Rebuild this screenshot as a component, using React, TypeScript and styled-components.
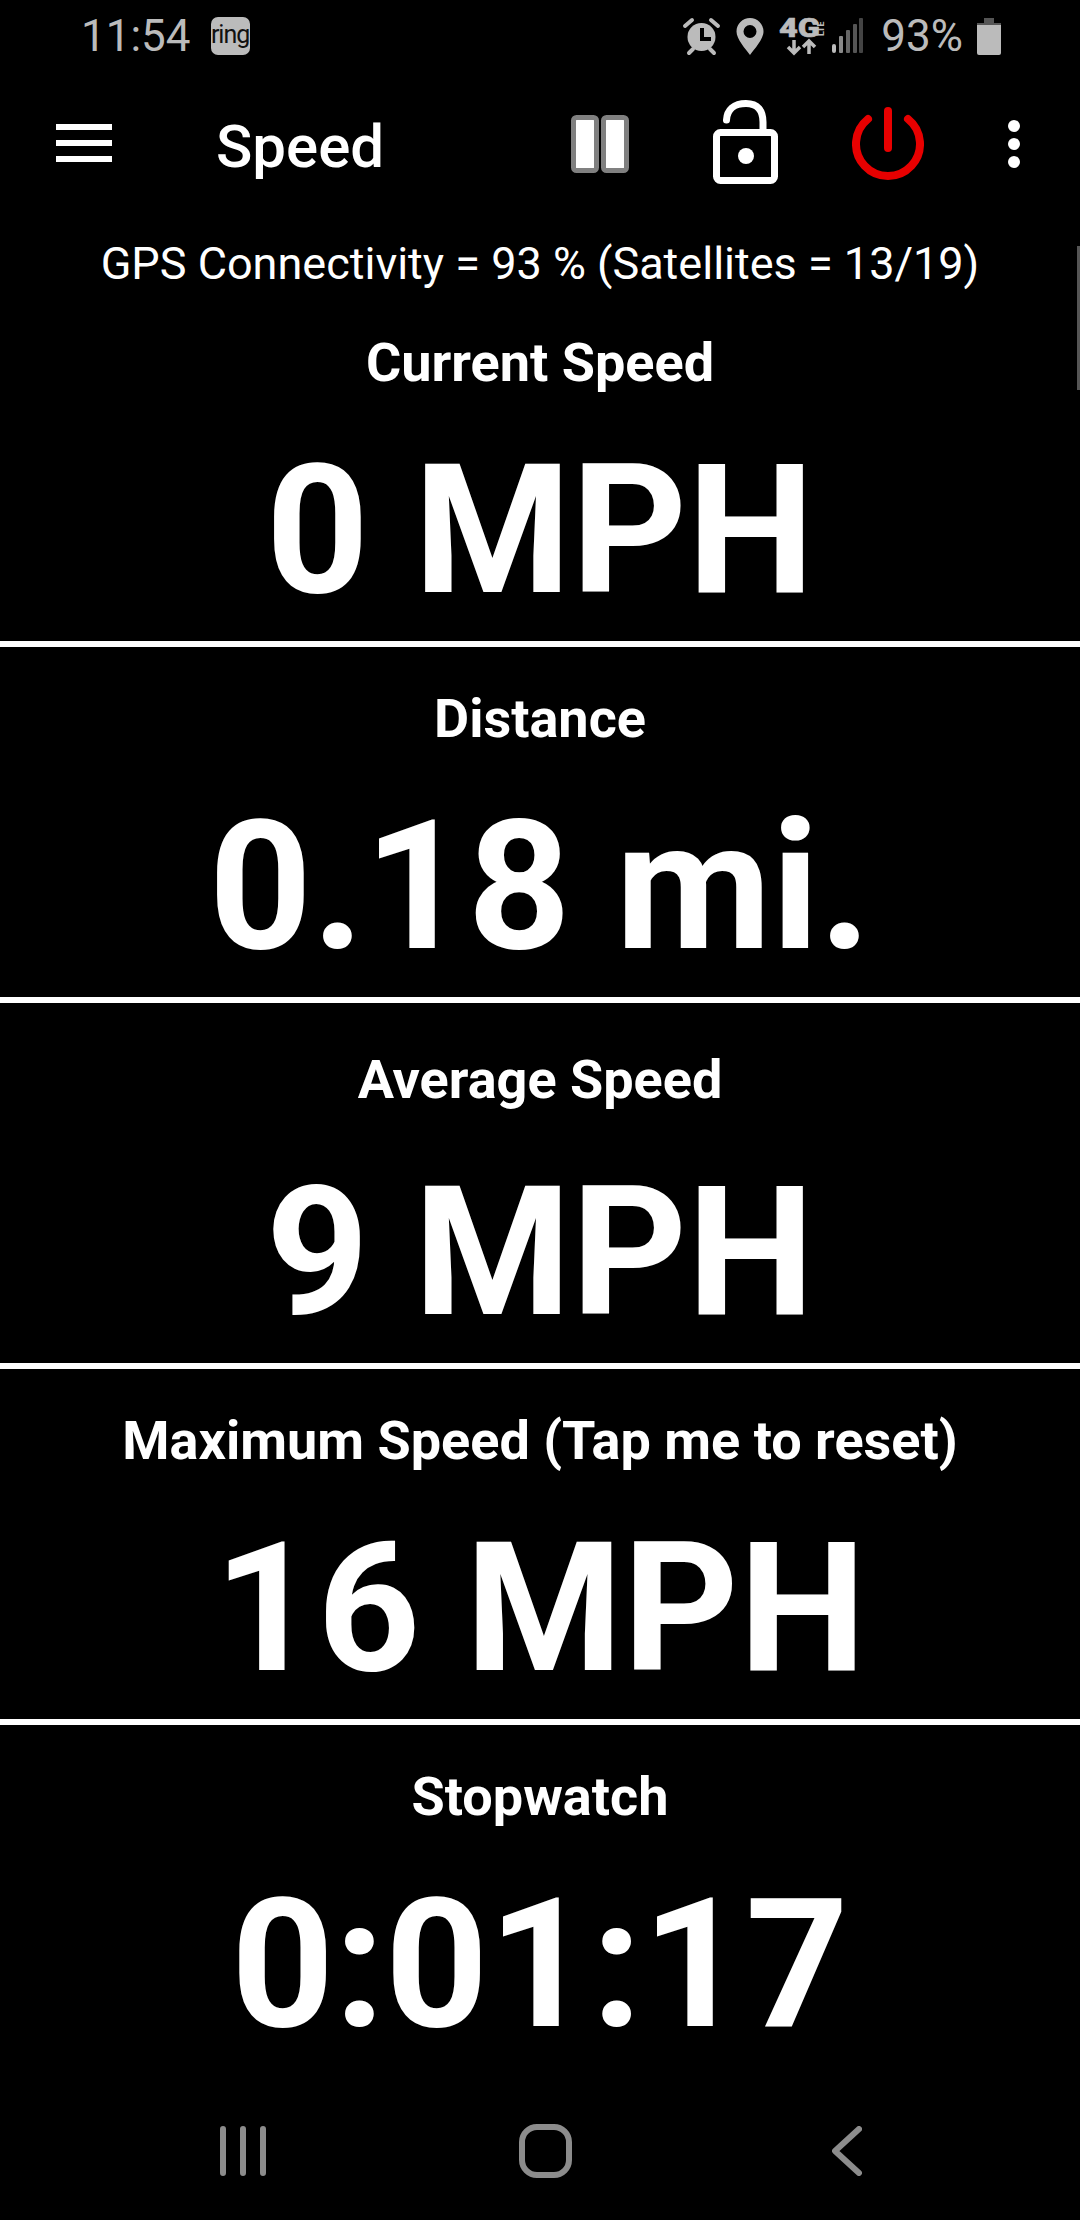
import * as React from 'react'
import styled, { createGlobalStyle } from 'styled-components'

const GlobalStyle = createGlobalStyle`
  html, body {
    background: #000;
    margin: 0;
    padding: 0;
  }
`

const Screen = styled.div`
  background: #000;
  color: #fff;
  display: flex;
  flex-direction: column;
  font-family: Roboto, "Liberation Sans", sans-serif;
  height: 2220px;
  overflow: hidden;
  position: relative;
  width: 1080px;
`

const Scrollbar = styled.div`
  background: #555;
  height: 144px;
  position: absolute;
  right: 0;
  top: 246px;
  width: 3px;
`

const StatusBar = styled.div`
  align-items: center;
  color: #bbb;
  display: flex;
  height: 72px;
  justify-content: space-between;
  padding: 0 79px 0 81px;
`

const StatusGroup = styled.div`
  align-items: center;
  display: flex;
`

const StatusText = styled.span`
  font-size: 44px;
  line-height: 72px;
`

const BatteryText = styled(StatusText)`
  margin-left: 18px;
`

const RingBadge = styled.span`
  align-items: center;
  background: #bbb;
  border-radius: 7px;
  box-sizing: border-box;
  color: #111;
  display: flex;
  font-size: 25px;
  height: 38px;
  justify-content: center;
  letter-spacing: -1px;
  margin-left: 20px;
  padding-bottom: 3px;
  width: 39px;
`

const StatusIcon = styled.svg<{ $gap: number }>`
  display: block;
  fill: #bbb;
  margin-left: ${(p) => p.$gap}px;
  overflow: visible;
`

const Toolbar = styled.div`
  align-items: center;
  display: flex;
  height: 144px;
  padding: 0 60px 0 56px;
`

const Hamburger = styled.div`
  display: flex;
  flex-direction: column;
  gap: 10px;
  margin-top: -2px;
  width: 56px;
`

const HamburgerBar = styled.span`
  background: #fff;
  display: block;
  height: 6px;
`

const Title = styled.h1`
  font-size: 60px;
  font-weight: 500;
  line-height: 70px;
  margin: 6px auto 0 104px;
`

const ToolIcon = styled.svg<{ $gap: number; $lift?: number }>`
  display: block;
  margin-bottom: ${(p) => p.$lift || 0}px;
  margin-left: ${(p) => p.$gap}px;
`

const Connectivity = styled.div`
  font-size: 45px;
  line-height: 55px;
  padding-top: 20px;
  text-align: center;
`

const Panel = styled.section<{ $loose?: boolean; $last?: boolean }>`
  border-bottom: ${(p) => (p.$last ? 'none' : '6px solid #fff')};
  padding: ${(p) => (p.$loose ? 47 : 42)}px 0 10px;
  text-align: center;
`

const Label = styled.div`
  font-size: 54px;
  font-weight: 700;
  line-height: 60px;
`

const Value = styled.div<{ $loose?: boolean }>`
  font-size: 180px;
  font-weight: 700;
  line-height: 200px;
  margin-top: ${(p) => (p.$loose ? 43 : 38)}px;
  white-space: nowrap;
`

const NavBar = styled.div`
  align-items: center;
  display: flex;
  height: 138px;
  margin-top: auto;
  padding-left: 220px;
`

const panels = [
  { label: 'Current Speed', value: '0 MPH' },
  { label: 'Distance', value: '0.18 mi.' },
  { label: 'Average Speed', value: '9 MPH', loose: true },
  { label: 'Maximum Speed (Tap me to reset)', value: '16 MPH' },
  { label: 'Stopwatch', value: '0:01:17' },
]

const AlarmIcon = () => (
  <StatusIcon $gap={0} width="37" height="38" viewBox="0 0 37 38">
    <circle cx="18.5" cy="20" r="14" />
    <path d="M17 11h4v9h7v4H17z" fill="#000" />
    <path d="M2 9l7-6M35 9l-7-6M6 36l4-4M31 36l-4-4" stroke="#bbb" strokeWidth="4" strokeLinecap="round" />
  </StatusIcon>
)

const PinIcon = () => (
  <StatusIcon $gap={16} width="28" height="37" viewBox="0 0 27 37">
    <path
      fillRule="evenodd"
      d="M13.5 0C21 0 27 6 27 13.5 27 21 18 31 13.5 37 9 31 0 21 0 13.5 0 6 6 0 13.5 0zM13.5 7a6.5 6.5 0 1 0 0 13 6.5 6.5 0 0 0 0-13z"
    />
  </StatusIcon>
)

const NetworkIcon = () => (
  <StatusIcon $gap={15} width="45" height="38" viewBox="0 0 45 38">
    <text
      transform="translate(0 20) scale(1.25 1)"
      fontFamily="Roboto, sans-serif"
      fontSize="26"
      fontWeight="900"
      stroke="#bbb"
      strokeWidth="0.6"
    >
      4G
    </text>
    <text
      transform="translate(45 19) rotate(-90)"
      fontFamily="Roboto, sans-serif"
      fontSize="9"
      fontWeight="700"
    >
      LTE
    </text>
    <path d="M15 23v13M9 30l6 6 6-6M30 37V24M24 30l6-6 6 6" fill="none" stroke="#bbb" strokeWidth="3.5" />
  </StatusIcon>
)

const SignalIcon = () => (
  <StatusIcon $gap={8} width="31" height="36" viewBox="0 0 31 36">
    <rect x="0" y="26" width="4" height="9" rx="2" />
    <rect x="7" y="18" width="4" height="17" rx="1" fill="#8a8a8a" />
    <rect x="14" y="12" width="4" height="23" rx="1" fill="#666" />
    <rect x="21" y="6" width="4" height="29" rx="1" fill="#555" />
    <rect x="27" y="0" width="4" height="35" rx="1" fill="#444" />
  </StatusIcon>
)

const BatteryIcon = () => (
  <StatusIcon $gap={14} width="24" height="37" viewBox="0 0 24 37">
    <path d="M7 0h10v5h7v2H0V5h7z" fill="#555" />
    <path d="M0 7h24v28a2 2 0 0 1-2 2H2a2 2 0 0 1-2-2z" />
  </StatusIcon>
)

const PauseIcon = () => (
  <ToolIcon $gap={0} width="58" height="58" viewBox="0 0 58 58">
    <rect x="2.5" y="2.5" width="23" height="53" rx="3" fill="#fff" stroke="#808080" strokeWidth="5" />
    <rect x="32.5" y="2.5" width="23" height="53" rx="3" fill="#fff" stroke="#808080" strokeWidth="5" />
  </ToolIcon>
)

const LockIcon = () => (
  <ToolIcon $gap={84} $lift={4} width="65" height="84" viewBox="0 0 65 84">
    <path d="M13.5 20C14 10 21 3.5 33 3.5S50 11 50 22v10" fill="none" stroke="#fff" strokeWidth="7" strokeLinecap="round" />
    <rect x="3.5" y="32.5" width="58" height="48" rx="4" fill="none" stroke="#fff" strokeWidth="7" />
    <circle cx="33" cy="56" r="8" fill="#fff" />
  </ToolIcon>
)

const PowerIcon = () => (
  <ToolIcon $gap={74} width="72" height="74" viewBox="0 0 72 74">
    <path d="M16 12a32 32 0 1 0 40 0" fill="none" stroke="#e80000" strokeWidth="8" strokeLinecap="round" />
    <path d="M36 4v37" fill="none" stroke="#e80000" strokeWidth="8" strokeLinecap="round" />
  </ToolIcon>
)

const MoreIcon = () => (
  <ToolIcon $gap={84} width="12" height="48" viewBox="0 0 12 48">
    <circle cx="6" cy="6" r="6" fill="#fff" />
    <circle cx="6" cy="24" r="6" fill="#fff" />
    <circle cx="6" cy="42" r="6" fill="#fff" />
  </ToolIcon>
)

const RecentIcon = () => (
  <ToolIcon $gap={0} width="46" height="50" viewBox="0 0 46 50">
    <path d="M3 3v44M23 3v44M43 3v44" fill="none" stroke="#8c8c8c" strokeWidth="6" strokeLinecap="round" />
  </ToolIcon>
)

const HomeIcon = () => (
  <ToolIcon $gap={253} width="53" height="54" viewBox="0 0 53 54">
    <rect x="3" y="3" width="47" height="48" rx="15" fill="none" stroke="#8c8c8c" strokeWidth="6" />
  </ToolIcon>
)

const BackIcon = () => (
  <ToolIcon $gap={260} width="30" height="50" viewBox="0 0 30 50">
    <path d="M27 3L3 25l24 22" fill="none" stroke="#8c8c8c" strokeWidth="6" strokeLinecap="round" strokeLinejoin="round" />
  </ToolIcon>
)

export default function App() {
  return (
    <Screen>
      <GlobalStyle />
      <Scrollbar />
      <StatusBar>
        <StatusGroup>
          <StatusText>11:54</StatusText>
          <RingBadge>ring</RingBadge>
        </StatusGroup>
        <StatusGroup>
          <AlarmIcon />
          <PinIcon />
          <NetworkIcon />
          <SignalIcon />
          <BatteryText>93%</BatteryText>
          <BatteryIcon />
        </StatusGroup>
      </StatusBar>
      <Toolbar>
        <Hamburger>
          <HamburgerBar />
          <HamburgerBar />
          <HamburgerBar />
        </Hamburger>
        <Title>Speed</Title>
        <PauseIcon />
        <LockIcon />
        <PowerIcon />
        <MoreIcon />
      </Toolbar>
      <Connectivity>GPS Connectivity = 93 % (Satellites = 13/19)</Connectivity>
      {panels.map((panel, i) => (
        <Panel key={panel.label} $loose={panel.loose} $last={i === panels.length - 1}>
          <Label>{panel.label}</Label>
          <Value $loose={panel.loose}>{panel.value}</Value>
        </Panel>
      ))}
      <NavBar>
        <RecentIcon />
        <HomeIcon />
        <BackIcon />
      </NavBar>
    </Screen>
  )
}
